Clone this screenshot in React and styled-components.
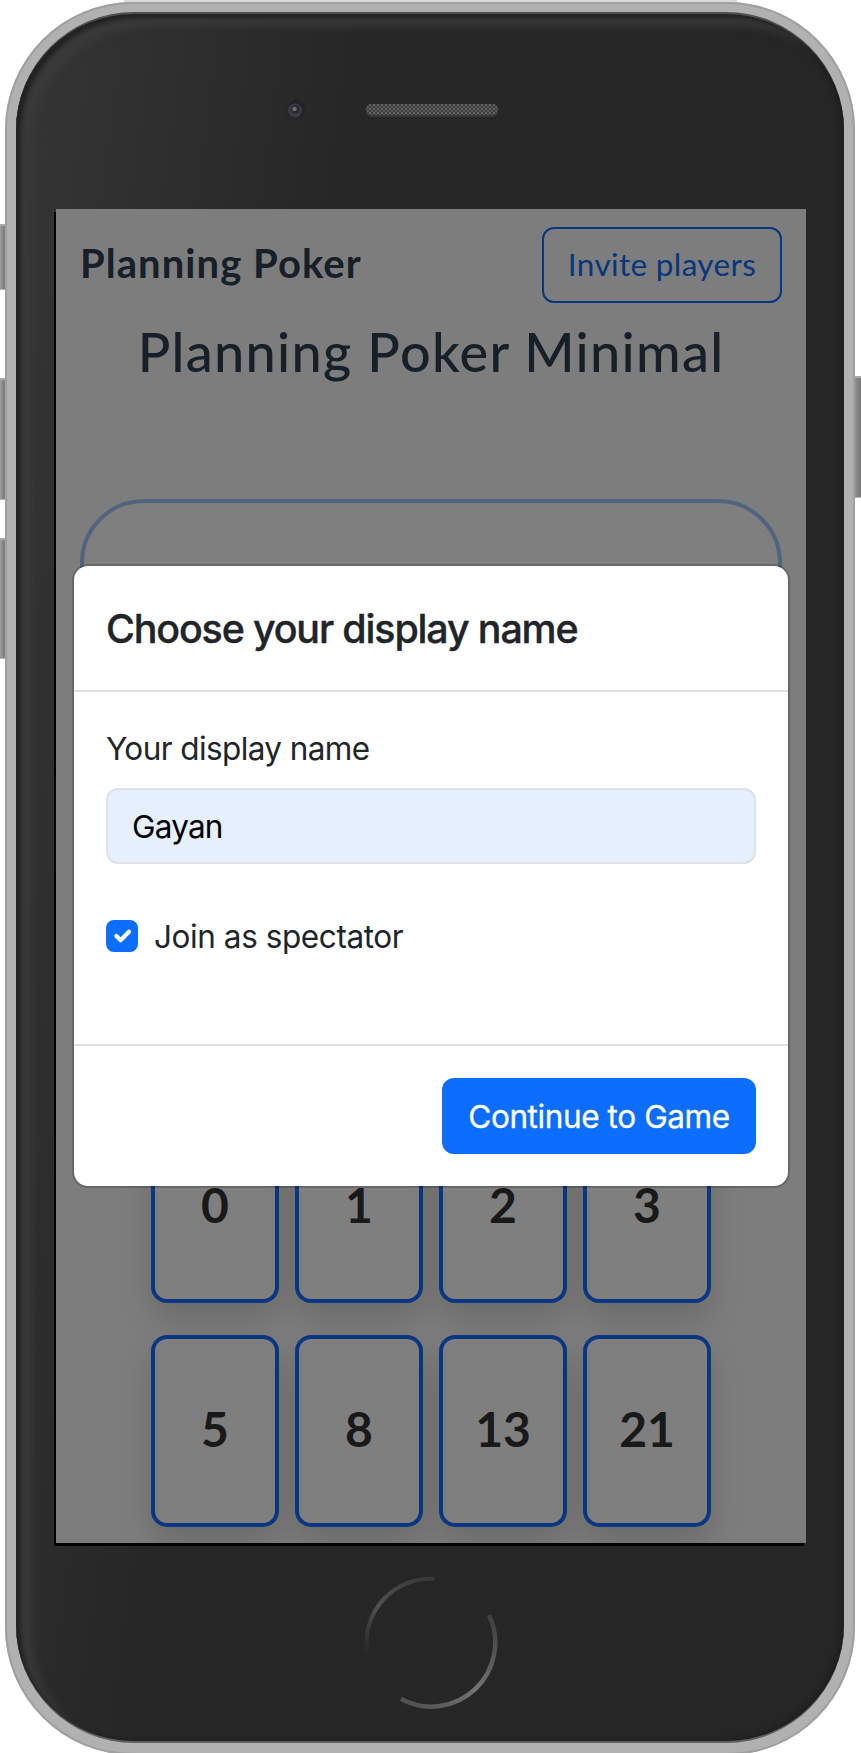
import React from "react";
import styled, { createGlobalStyle } from "styled-components";

const GlobalStyle = createGlobalStyle`
  *, *::before, *::after { box-sizing: border-box; }
  html, body { margin: 0; background: #fff; }
  body { width: 861px; height: 1753px; overflow: hidden; }
  h1, h2, p { margin: 0; }
  button, input { font: inherit; margin: 0; }
`;

const brandFont = `Lato, "Liberation Sans", sans-serif`;
const uiFont = `Inter, "Liberation Sans", sans-serif`;

const Stage = styled.div`
  position: relative;
  width: 861px;
  height: 1753px;
  padding: 2px 6px 0 5px;
  overflow: hidden;
  background: #fff;
`;

const TopHighlight = styled.div`
  position: absolute;
  top: 0;
  left: 124px;
  right: 124px;
  height: 2px;
  background: #dadada;
`;

const SideKey = styled.div`
  position: absolute;
  ${(p) => p.$side}: 0;
  top: ${(p) => p.$top}px;
  width: 7px;
  height: ${(p) => p.$height}px;
  border-top: 2px solid #a8a8a8;
  border-bottom: 1px solid #b5b5b5;
  background: linear-gradient(to left, #777, #858585 60%, #a0a0a0);
`;

const Rim = styled.div`
  position: relative;
  height: 1753px;
  padding: 10px 11px 12px;
  border-radius: 128px;
  background: #b1b1b1;
  box-shadow: inset 0 0 0 2px #a0a0a0;
`;

const Face = styled.div`
  height: 1731px;
  display: flex;
  flex-direction: column;
  border-radius: 118px;
  border-top: 2px solid #505050;
  border-bottom: 2px solid #606060;
  background: linear-gradient(98deg, #363636 0%, #303030 12%, #262626 34%, #262626 100%);
  box-shadow: inset 5px 4px 4px #222, inset 16px 12px 8px #3a3a3a,
    inset -4px -1px 4px #1f1f1f;
`;

const Forehead = styled.div`
  flex: 0 0 195px;
  display: flex;
  align-items: flex-start;
  padding: 84px 0 0 267px;
`;

const Camera = styled.svg`
  width: 24px;
  height: 24px;
  margin-right: 58px;
`;

const Speaker = styled.svg`
  width: 134px;
  height: 14px;
  margin-top: 6px;
`;

const Screen = styled.main`
  position: relative;
  flex: 0 0 1334px;
  width: 750px;
  margin-left: 40px;
  background: #fafafa;
  box-shadow: -2px 3px 0 #000;
  font-family: ${brandFont};
`;

const Clip = styled.div`
  height: 1334px;
  overflow: hidden;
`;

const TopBar = styled.header`
  display: flex;
  align-items: center;
  justify-content: space-between;
  padding: 18px 24px 0;
`;

const Brand = styled.p`
  padding-bottom: 4px;
  font-size: 40px;
  font-weight: 700;
  line-height: 60px;
  letter-spacing: 1.05px;
  color: #2f3e50;
`;

const InviteButton = styled.button`
  width: 240px;
  height: 76px;
  border: 2px solid #0d6efd;
  border-radius: 12px;
  background: transparent;
  color: #0d6efd;
  font-size: 31.5px;
  font-weight: 400;
  letter-spacing: 0.35px;
  padding: 0 0 3px;
  white-space: nowrap;
`;

const GameTitle = styled.h1`
  padding-top: 15px;
  height: 196px;
  text-align: center;
  font-size: 54px;
  font-weight: 500;
  line-height: 68px;
  letter-spacing: 1.3px;
  color: #2f3e50;
  white-space: nowrap;
`;

const Table = styled.section`
  height: 430px;
  margin: 0 24px;
  border: 4px solid #a0c8ff;
  border-radius: 64px;
  background: #fff;
`;

const Deck = styled.section`
  display: grid;
  grid-template-columns: repeat(4, 128px);
  gap: 32px 16px;
  justify-content: center;
  margin-top: 182px;
`;

const Card = styled.div`
  height: 192px;
  display: flex;
  align-items: center;
  justify-content: center;
  border: 4px solid #146eff;
  border-radius: 16px;
  background: #fff;
  box-shadow: 0 16px 32px rgba(0, 10, 0, 0.15);
  color: #333;
  font-size: 48px;
  font-weight: 700;
  padding-bottom: 6px;
`;

const Backdrop = styled.div`
  position: absolute;
  inset: 0;
  display: flex;
  align-items: center;
  justify-content: center;
  background: rgba(0, 0, 0, 0.5);
`;

const Dialog = styled.div`
  width: 718px;
  border: 2px solid rgba(0, 0, 0, 0.175);
  border-radius: 16px;
  background: #fff;
  background-clip: padding-box;
  color: #212529;
  font-family: ${uiFont};
  font-size: 31.5px;
  font-weight: 400;
  line-height: 48px;
`;

const DialogHeader = styled.div`
  padding: 33px 32px 31px;
  border-bottom: 2px solid #dee2e6;
`;

const DialogTitle = styled.h2`
  font-size: 39.4px;
  line-height: 60px;
  font-weight: 500;
  letter-spacing: -1.15px;
  -webkit-text-stroke: 0.4px currentColor;
`;

const DialogBody = styled.div`
  height: 352px;
  padding: 33px 32px 31px;
`;

const Label = styled.label`
  display: block;
  margin-bottom: 15px;
  letter-spacing: -0.6px;
`;

const NameInput = styled.input`
  display: block;
  width: 100%;
  height: 76px;
  padding: 0 24px;
  border: 2px solid #dee2e6;
  border-radius: 12px;
  background: #e6effe;
  color: #000;
  letter-spacing: -0.8px;
  outline: none;
`;

const CheckRow = styled.div`
  display: flex;
  align-items: center;
  gap: 16px;
  height: 48px;
  margin-top: 48px;
  letter-spacing: -0.42px;
`;

const CheckBox = styled.span`
  display: flex;
  align-items: center;
  justify-content: center;
  width: 32px;
  height: 32px;
  border-radius: 8px;
  background: #0d6efd;
`;

const CheckText = styled.span`
  padding-top: 2px;
`;

const DialogFooter = styled.div`
  display: flex;
  justify-content: flex-end;
  padding: 32px;
  border-top: 2px solid #dee2e6;
`;

const PrimaryButton = styled.button`
  width: 314px;
  height: 76px;
  padding: 2px 0 0;
  border: 0;
  border-radius: 12px;
  background: #0d6efd;
  color: #fff;
  letter-spacing: -0.4px;
  -webkit-text-stroke: 0.3px currentColor;
  white-space: nowrap;
`;

const Chin = styled.div`
  flex: 1;
  display: flex;
  justify-content: center;
  padding: 31px 0 0 1px;
`;

const HomeRing = styled.svg`
  width: 136px;
  height: 136px;
`;

const cards = ["0", "1", "2", "3", "5", "8", "13", "21"];

export default function App() {
  return (
    <Stage>
      <GlobalStyle />
      <TopHighlight />
      <SideKey $side="left" $top={224} $height={66} />
      <SideKey $side="left" $top={378} $height={122} />
      <SideKey $side="left" $top={538} $height={121} />
      <SideKey $side="right" $top={376} $height={122} />
      <Rim>
        <Face>
          <Forehead>
            <Camera viewBox="0 0 24 24">
              <circle cx="12" cy="12" r="11" fill="#28272b" />
              <circle cx="14" cy="11" r="9" fill="#232229" />
              <circle cx="12" cy="12.500" r="7" fill="#3c3c42" />
              <circle cx="12.500" cy="11.500" r="4.500" fill="#2a2a31" />
              <circle cx="11.500" cy="11" r="2.200" fill="#6c6c74" />
            </Camera>
            <Speaker viewBox="0 0 134 14">
              <defs>
                <pattern id="mesh" width="4" height="4" patternUnits="userSpaceOnUse">
                  <rect width="4" height="4" fill="#3c3c3c" />
                  <rect width="2" height="2" fill="#646464" />
                  <rect x="2" y="2" width="2" height="2" fill="#5c5c5c" />
                </pattern>
              </defs>
              <rect x="1" y="0" width="132" height="13" rx="5" fill="#363636" />
              <rect x="1" y="0" width="132" height="11" rx="5" fill="url(#mesh)" />
            </Speaker>
          </Forehead>
          <Screen>
            <Clip>
              <TopBar>
                <Brand>Planning Poker</Brand>
                <InviteButton>Invite players</InviteButton>
              </TopBar>
              <GameTitle>Planning Poker Minimal</GameTitle>
              <Table />
              <Deck>
                {cards.map((value) => (
                  <Card key={value}>{value}</Card>
                ))}
              </Deck>
            </Clip>
            <Backdrop>
              <Dialog role="dialog">
                <DialogHeader>
                  <DialogTitle>Choose your display name</DialogTitle>
                </DialogHeader>
                <DialogBody>
                  <Label htmlFor="name">Your display name</Label>
                  <NameInput id="name" defaultValue="Gayan" />
                  <CheckRow>
                    <CheckBox role="checkbox" aria-checked="true">
                      <svg viewBox="0 0 20 20" width="28" height="28">
                        <path
                          d="m6 10 3 3 6-6"
                          fill="none"
                          stroke="#fff"
                          strokeWidth="3"
                          strokeLinecap="round"
                          strokeLinejoin="round"
                        />
                      </svg>
                    </CheckBox>
                    <CheckText>Join as spectator</CheckText>
                  </CheckRow>
                </DialogBody>
                <DialogFooter>
                  <PrimaryButton>Continue to Game</PrimaryButton>
                </DialogFooter>
              </Dialog>
            </Backdrop>
          </Screen>
          <Chin>
            <HomeRing viewBox="0 0 136 136" fill="none">
              <defs>
                <linearGradient id="arcUpper" x1="0" y1="1" x2="1" y2="0">
                  <stop offset="0" stopColor="#2a2a2a" />
                  <stop offset="0.4" stopColor="#505050" />
                  <stop offset="1" stopColor="#363636" />
                </linearGradient>
                <linearGradient id="arcLower" x1="1" y1="0" x2="0" y2="1">
                  <stop offset="0" stopColor="#3c3c3c" />
                  <stop offset="0.5" stopColor="#747474" />
                  <stop offset="1" stopColor="#4c4c4c" />
                </linearGradient>
              </defs>
              <path d="M4 77 A64 64 0 0 1 72 5" stroke="url(#arcUpper)" strokeWidth="4" />
              <path d="M126 41 A64 64 0 0 1 38 125" stroke="url(#arcLower)" strokeWidth="4.500" />
            </HomeRing>
          </Chin>
        </Face>
      </Rim>
    </Stage>
  );
}
